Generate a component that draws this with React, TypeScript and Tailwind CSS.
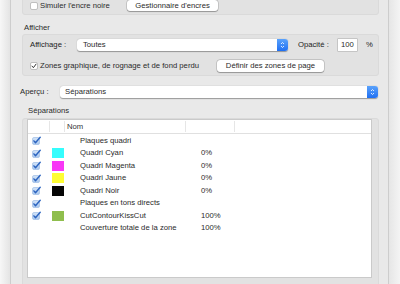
import React from "react";

const F = { fontFamily: '"Liberation Sans", Arial, sans-serif' };

function BlueCheck() {
  return (
    <svg width="9" height="9" viewBox="0 0 9 9" className="block">
      <defs>
        <linearGradient id="bc" x1="0" y1="0" x2="0" y2="1">
          <stop offset="0" stopColor="#d3e4f8" />
          <stop offset="1" stopColor="#a9c7ee" />
        </linearGradient>
      </defs>
      <rect x="0.5" y="1.5" width="7" height="7" rx="1.5" fill="url(#bc)" stroke="#94b6e2" strokeWidth="0.6" />
      <path d="M1.9 4.9 L3.5 6.8 L8.2 1.2" fill="none" stroke="#2b63bf" strokeWidth="1.4" strokeLinecap="round" strokeLinejoin="round" />
    </svg>
  );
}

function PlainCheck({ checked }: { checked?: boolean }) {
  return (
    <svg width="8" height="8" viewBox="0 0 8 8" className="block">
      <rect x="0.5" y="0.5" width="7" height="7" rx="1.5" fill="#ffffff" stroke="#a9a9a9" strokeWidth="0.7" />
      {checked && (
        <path d="M2 4.1 L3.4 5.7 L6 2.2" fill="none" stroke="#333" strokeWidth="1" strokeLinecap="round" strokeLinejoin="round" />
      )}
    </svg>
  );
}

function Stepper() {
  return (
    <div className="w-[11px] h-full rounded-r-[3px] bg-gradient-to-b from-[#5aa2fb] to-[#1f6ff2] flex items-center justify-center">
      <svg width="5" height="8" viewBox="0 0 5 8">
        <path d="M1 3 L2.5 1.5 L4 3" fill="none" stroke="#fff" strokeWidth="0.8" />
        <path d="M1 5 L2.5 6.5 L4 5" fill="none" stroke="#fff" strokeWidth="0.8" />
      </svg>
    </div>
  );
}

function Popup({ text, width, pl }: { text: string; width: string; pl: string }) {
  return (
    <div className={`${width} h-[12px] flex bg-white rounded-[3px] shadow-[0_0.5px_1px_rgba(0,0,0,0.35)]`}>
      <div className={`flex-1 flex items-center ${pl} text-[#2a2a2a] leading-none`}>{text}</div>
      <Stepper />
    </div>
  );
}

function Button({ text, width }: { text: string; width: string }) {
  return (
    <div className={`${width} h-[11px] bg-white rounded-[3px] shadow-[0_0_0_0.5px_rgba(0,0,0,0.22),0_0.5px_1px_rgba(0,0,0,0.25)] flex items-center justify-center text-[#2a2a2a] leading-none`}>
      {text}
    </div>
  );
}

type Row = { check: boolean; color?: string; name: string; pct?: string };

const rows: Row[] = [
  { check: true, name: "Plaques quadri" },
  { check: true, color: "#35fdfd", name: "Quadri Cyan", pct: "0%" },
  { check: true, color: "#f837f6", name: "Quadri Magenta", pct: "0%" },
  { check: true, color: "#fefd34", name: "Quadri Jaune", pct: "0%" },
  { check: true, color: "#050505", name: "Quadri Noir", pct: "0%" },
  { check: true, name: "Plaques en tons directs" },
  { check: true, color: "#8fbe4d", name: "CutContourKissCut", pct: "100%" },
  { check: false, name: "Couverture totale de la zone", pct: "100%" },
];

export default function App() {
  return (
    <div style={F} className="w-[400px] h-[284px] overflow-hidden flex bg-[#f1f1f1] text-[7.7px] text-[#2a2a2a]">
      <div className="w-[10px] h-full bg-gradient-to-r from-[#f7f7f7] to-[#e4e4e4]" />
      <div className="w-[379px] h-full flex flex-col bg-[#e9e9e9] border-l border-r border-[#cdcdcd]">
        {/* group 1 */}
        <div className="ml-[11px] mt-[-6px] w-[357px] h-[21px] shrink-0 bg-[#e2e2e2] rounded-[3px] border border-[#dadada] flex items-center pl-[7px] pt-[2px]">
          <PlainCheck />
          <span className="ml-[2px] w-[87px] leading-none">Simuler l'encre noire</span>
          <Button text="Gestionnaire d'encres" width="w-[91px]" />
        </div>

        <div className="ml-[13px] mt-[8px] h-[10px] leading-[10px] shrink-0">Afficher</div>

        {/* group 2 */}
        <div className="ml-[11px] mt-[1px] w-[357px] h-[42px] shrink-0 bg-[#e2e2e2] rounded-[3px] border border-[#dadada] pl-[7px] pt-[4px] flex flex-col">
          <div className="flex items-center h-[12px]">
            <span className="w-[47px] leading-none text-[#222]">Affichage :</span>
            <Popup text="Toutes" width="w-[211px]" pl="pl-[6px]" />
            <span className="ml-[10px] w-[40px] leading-none text-[#222]">Opacité :</span>
            <div className="w-[19px] h-[12px] bg-white shadow-[0_0_0_0.5px_rgba(0,0,0,0.25)] flex items-center pl-[3px] leading-none">100</div>
            <span className="ml-[9px] leading-none text-[#222]">%</span>
          </div>
          <div className="flex items-center h-[12px] mt-[9px]">
            <PlainCheck checked />
            <span className="ml-[2px] w-[177px] leading-none whitespace-nowrap">Zones graphique, de rognage et de fond perdu</span>
            <Button text="Définir des zones de page" width="w-[107px] h-[12px]" />
          </div>
        </div>

        {/* Aperçu */}
        <div className="flex items-center h-[12px] mt-[10px] ml-[9px] shrink-0">
          <span className="w-[40px] leading-none">Aperçu :</span>
          <Popup text="Séparations" width="w-[318px]" pl="pl-[5px]" />
        </div>

        <div className="ml-[17px] mt-[8px] h-[10px] leading-[10px] shrink-0">Séparations</div>

        {/* group 3 */}
        <div className="ml-[11px] mt-[2px] w-[357px] h-[180px] shrink-0 bg-[#e2e2e2] rounded-[3px] border border-[#dadada] pl-[4px] pt-0">
          <div className="w-[345px] h-[159px] bg-white border border-[#cacaca] flex flex-col">
            <div className="h-[14px] shrink-0 flex border-b border-[#e0e0e0]">
              <div className="w-[21px] h-full" />
              <div className="w-[15px] my-[1px] border-l border-[#e6e6e6]" />
              <div className="w-[121px] my-[1px] border-l border-[#e6e6e6] flex items-center pl-[2px] leading-none text-[#333]">Nom</div>
              <div className="w-[49px] my-[1px] border-l border-[#e6e6e6]" />
              <div className="flex-1 my-[1px] border-l border-[#e6e6e6]" />
            </div>
            <div className="flex flex-col pt-[0.5px]">
              {rows.map((r) => (
                <div key={r.name} className="h-[12.5px] flex items-center">
                  <div className="w-[22px] pl-[4px] flex items-center">{r.check && <BlueCheck />}</div>
                  <div className="w-[15px] pl-[2px] flex items-center">
                    {r.color && <div className="w-[12px] h-[10px]" style={{ backgroundColor: r.color }} />}
                  </div>
                  <div className="w-[121px] pl-[15px] leading-none whitespace-nowrap">{r.name}</div>
                  <div className="pl-[15px] leading-none">{r.pct}</div>
                </div>
              ))}
            </div>
          </div>
        </div>
      </div>
      <div className="flex-1 h-full bg-gradient-to-r from-[#e6e6e6] to-[#f4f4f4]" />
    </div>
  );
}
